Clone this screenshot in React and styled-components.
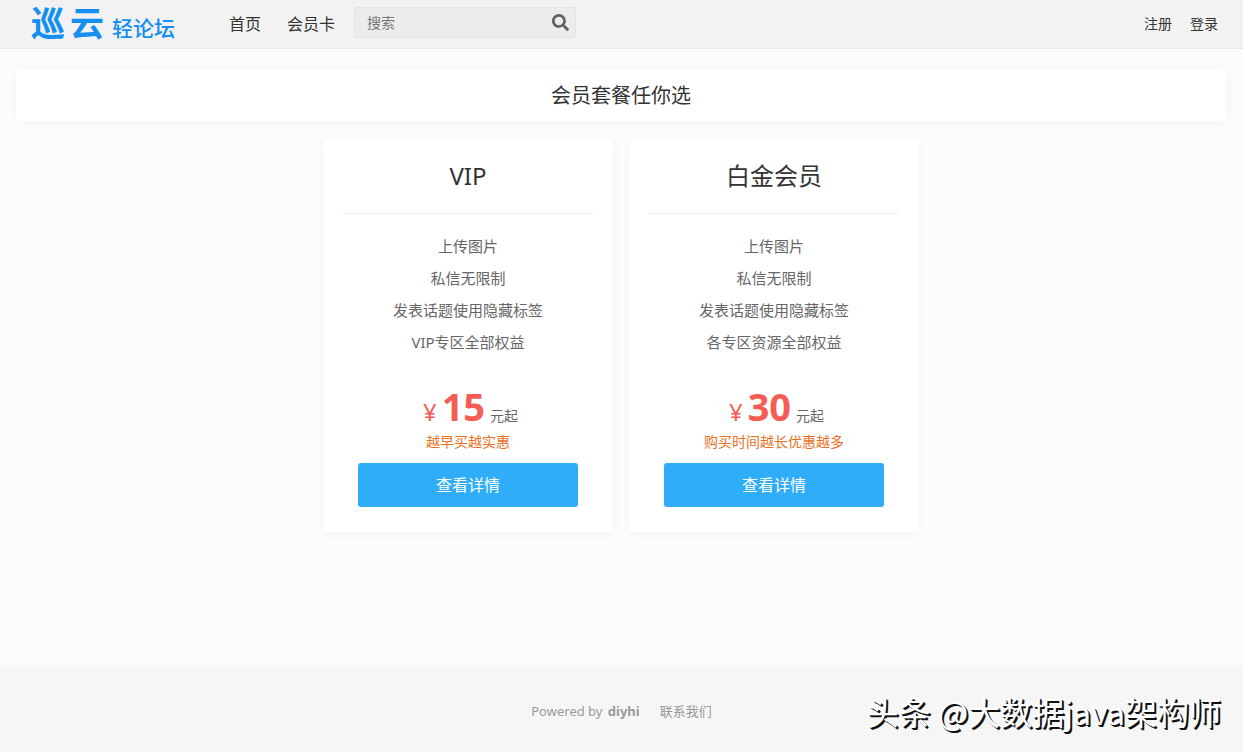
import styled, { createGlobalStyle } from 'styled-components';
import { FaSearch } from 'react-icons/fa';

const GlobalStyle = createGlobalStyle`
  * {
    box-sizing: border-box;
  }

  body {
    margin: 0;
    background: #fcfcfc;
    color: #333;
    font-family: 'Noto Sans', 'Noto Sans CJK SC', sans-serif;
    font-size: 14px;
    line-height: 20px;
  }

  a {
    color: inherit;
    text-decoration: none;
  }
`;

const Page = styled.div`
  position: relative;
  display: flex;
  flex-direction: column;
  min-height: 100vh;
`;

const Header = styled.header`
  display: flex;
  align-items: center;
  height: 49px;
  padding: 0 25px 3px 31px;
  background: #f2f2f2;
  border-bottom: 1px solid #e8e8e8;
`;

const Logo = styled.a`
  display: flex;
  align-items: baseline;
  gap: 5px;
  width: 198px;
  padding-top: 5px;
  color: #1590f0;
  line-height: 48px;
  white-space: nowrap;
`;

const LogoMark = styled.span`
  font-size: 34px;
  font-weight: 700;
`;

const LogoText = styled.span`
  margin-left: 3px;
  font-size: 21px;
  font-weight: 500;
`;

const Nav = styled.nav`
  display: flex;
  gap: ${({ $gap }) => $gap}px;
  padding-top: 3px;
  font-size: ${({ $size }) => $size}px;
`;

const Search = styled.form`
  display: flex;
  align-items: center;
  width: 222px;
  height: 31px;
  margin: 0 auto 0 19px;
  padding: 0 6px 0 12px;
  background: #ececec;
  border: 1px solid #e2e2e2;
  border-radius: 3px;
`;

const SearchInput = styled.input`
  flex: 1;
  min-width: 0;
  padding: 0;
  background: none;
  border: 0;
  outline: 0;
  color: #333;
  font: inherit;

  &::placeholder {
    color: #777;
    opacity: 1;
  }
`;

const SearchButton = styled.button`
  display: flex;
  padding: 0;
  background: none;
  border: 0;
  color: #606060;
  font-size: 17px;
  cursor: pointer;
`;

const Main = styled.main`
  flex: 1;
  padding: 20px 17px 24px 16px;
`;

const Panel = styled.section`
  background: #fff;
  border-radius: 3px;
  box-shadow: 0 2px 12px rgba(0, 0, 0, 0.04);
  text-align: center;
`;

const Banner = styled(Panel)`
  padding: 13px 20px 11px;
`;

const BannerTitle = styled.h1`
  margin: 0;
  font-size: 20px;
  font-weight: 400;
  line-height: 28px;
`;

const CardList = styled.div`
  display: flex;
  flex-wrap: wrap;
  justify-content: center;
  gap: 16px;
  margin-top: 18px;
`;

const Card = styled(Panel)`
  width: 290px;
  padding: 20px 20px 25px;
`;

const CardTitle = styled.h2`
  margin: 0 0 16px;
  padding-bottom: 20px;
  border-bottom: 1px solid #eee;
  font-size: 24px;
  font-weight: 400;
  line-height: 34px;
`;

const Features = styled.ul`
  margin: 0 0 24px;
  padding: 0;
  color: #666;
  font-size: 15px;
  line-height: 32px;
  list-style: none;
`;

const Price = styled.div`
  display: flex;
  align-items: baseline;
  justify-content: center;
  gap: 5px;
  height: 50px;
  padding-left: 5px;
  color: #f55d54;
  font-size: 24px;
  line-height: 48px;
`;

const Amount = styled.strong`
  font-size: 38px;
`;

const Unit = styled.span`
  color: #666;
  font-size: 14px;
`;

const Note = styled.p`
  margin: 0 0 11px;
  color: #ea6f1e;
`;

const DetailButton = styled.button`
  width: 220px;
  height: 44px;
  background: #30adf8;
  border: 0;
  border-radius: 3px;
  color: #fff;
  font: inherit;
  font-size: 16px;
  cursor: pointer;
`;

const Footer = styled.footer`
  display: flex;
  align-items: center;
  justify-content: center;
  gap: 20px;
  height: 87px;
  padding-top: 4px;
  background: #f7f6f7;
  color: #999;
  font-size: 13px;
`;

const Brand = styled.strong`
  margin-left: 2px;
`;

const Watermark = styled.span`
  position: absolute;
  right: 22px;
  bottom: 19px;
  color: #fff;
  font-family: 'Noto Sans CJK SC', sans-serif;
  font-size: 32px;
  line-height: 44px;
  text-shadow: 1px 1px 0 #111, 2px 2px 0 #111;
  white-space: nowrap;
  pointer-events: none;
`;

const cards = [
  {
    name: 'VIP',
    features: ['上传图片', '私信无限制', '发表话题使用隐藏标签', 'VIP专区全部权益'],
    price: 15,
    note: '越早买越实惠',
  },
  {
    name: '白金会员',
    features: ['上传图片', '私信无限制', '发表话题使用隐藏标签', '各专区资源全部权益'],
    price: 30,
    note: '购买时间越长优惠越多',
  },
];

function MembershipCard({ name, features, price, note }) {
  return (
    <Card>
      <CardTitle>{name}</CardTitle>
      <Features>
        {features.map((feature) => (
          <li key={feature}>{feature}</li>
        ))}
      </Features>
      <Price>
        <span>¥</span>
        <Amount>{price}</Amount>
        <Unit>元起</Unit>
      </Price>
      <Note>{note}</Note>
      <DetailButton type='button'>查看详情</DetailButton>
    </Card>
  );
}

function App() {
  return (
    <Page>
      <GlobalStyle />
      <Header>
        <Logo href='#'>
          <LogoMark>巡</LogoMark>
          <LogoMark>云</LogoMark>
          <LogoText>轻论坛</LogoText>
        </Logo>
        <Nav $gap={26} $size={16}>
          <a href='#'>首页</a>
          <a href='#'>会员卡</a>
        </Nav>
        <Search role='search' onSubmit={(e) => e.preventDefault()}>
          <SearchInput type='text' placeholder='搜索' aria-label='搜索' />
          <SearchButton type='submit' aria-label='搜索'>
            <FaSearch />
          </SearchButton>
        </Search>
        <Nav $gap={18} $size={14}>
          <a href='#'>注册</a>
          <a href='#'>登录</a>
        </Nav>
      </Header>

      <Main>
        <Banner>
          <BannerTitle>会员套餐任你选</BannerTitle>
        </Banner>
        <CardList>
          {cards.map((card) => (
            <MembershipCard key={card.name} {...card} />
          ))}
        </CardList>
      </Main>

      <Footer>
        <span>
          Powered by <Brand>diyhi</Brand>
        </span>
        <a href='#'>联系我们</a>
      </Footer>
      <Watermark>头条 @大数据java架构师</Watermark>
    </Page>
  );
}

export default App;
